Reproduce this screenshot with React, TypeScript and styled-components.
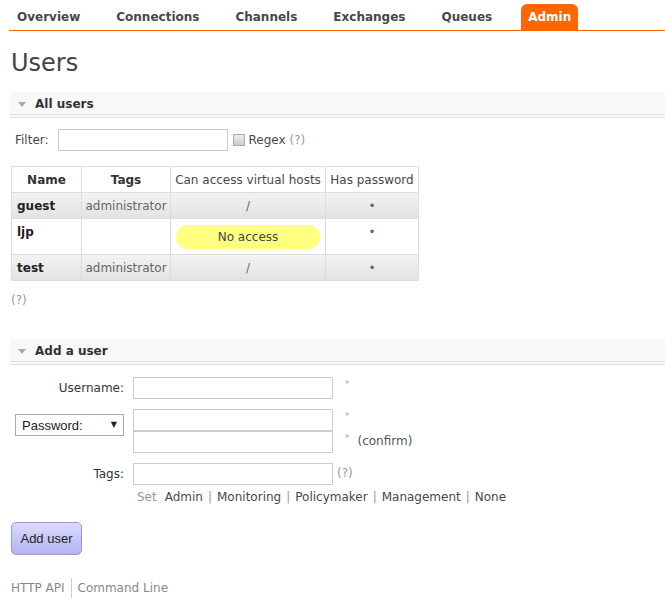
import styled, { createGlobalStyle } from "styled-components";

const GlobalStyle = createGlobalStyle`
  body {
    margin: 0;
    background: #fff;
    font-family: "DejaVu Sans", Verdana, sans-serif;
    font-size: 12px;
    color: #484848;
  }
`;

const tabs = ["Overview", "Connections", "Channels", "Exchanges", "Queues", "Admin"];

const users = [
  { name: "guest", tags: "administrator", vhosts: "/", alt: true },
  { name: "ljp", tags: "", vhosts: null, alt: false },
  { name: "test", tags: "administrator", vhosts: "/", alt: true },
];

const tagLinks = ["Admin", "Monitoring", "Policymaker", "Management", "None"];

const TabBar = styled.ul`
  display: flex;
  align-items: flex-end;
  height: 30px;
  margin: 0 0 0 9px;
  padding: 0 0 0 1px;
  list-style: none;
  border-bottom: 1px solid #f60;
`;

const Tab = styled.li<{ $active?: boolean }>`
  height: 26px;
  line-height: 26px;
  padding: 0 7px;
  margin-right: 22px;
  font-weight: bold;
  color: ${(p) => (p.$active ? "#fff" : "#484848")};
  background: ${(p) => (p.$active ? "#f60" : "transparent")};
  border-radius: 6px 6px 0 0;
`;

const Title = styled.h1`
  margin: 17px 0 14px 11px;
  font-size: 24px;
  line-height: 30px;
  font-weight: normal;
  color: #444;
`;

const SectionHeader = styled.h2<{ $top?: number }>`
  display: flex;
  align-items: center;
  gap: 9px;
  height: 20px;
  margin: ${(p) => p.$top ?? 0}px 0 0 10px;
  padding: 2px 0 0 8px;
  background: #f8f8f8;
  border-bottom: 4px double #e0e0e0;
  font-size: 12px;
  font-weight: bold;
  color: #333;
`;

const Triangle = styled.span`
  width: 0;
  height: 0;
  border-left: 4.5px solid transparent;
  border-right: 4.5px solid transparent;
  border-top: 5px solid #aaa;
`;

const Section = styled.div`
  margin-left: 11px;
`;

const FilterRow = styled.div`
  display: flex;
  align-items: center;
  margin: 11px 0 0 4px;
`;

const TextInput = styled.input<{ $width?: number }>`
  box-sizing: border-box;
  width: ${(p) => p.$width ?? 200}px;
  height: 22px;
  margin: 0;
  border: 1px solid #ccc;
  background: #fff;
  font: inherit;
`;

const FilterInput = styled(TextInput)`
  margin-left: 9px;
`;

const Checkbox = styled.span`
  box-sizing: border-box;
  width: 12px;
  height: 12px;
  margin: 0 4px 0 5px;
  border: 1px solid #aaa;
  background: linear-gradient(#eee, #ccc);
`;

const Help = styled.span`
  color: #999;
`;

const Table = styled.table`
  width: 408px;
  margin-top: 15px;
  table-layout: fixed;
  border-collapse: collapse;
  border: 1px solid #ccc;
`;

const Th = styled.th<{ $plain?: boolean; $width: number }>`
  width: ${(p) => p.$width}px;
  padding: 6px 0 5px;
  line-height: 14px;
  border: 1px solid #ddd;
  font-weight: ${(p) => (p.$plain ? "normal" : "bold")};
  color: ${(p) => (p.$plain ? "#484848" : "#333")};
  white-space: nowrap;
`;

const Tr = styled.tr<{ $alt?: boolean }>`
  background: ${(p) => (p.$alt ? "linear-gradient(#f3f3f3, #e2e2e2)" : "#fff")};
`;

const Td = styled.td<{ $name?: boolean }>`
  padding: 6px ${(p) => (p.$name ? 5 : 3)}px 5px;
  line-height: 14px;
  vertical-align: top;
  border: 1px solid #ddd;
  white-space: nowrap;
  text-align: ${(p) => (p.$name ? "left" : "center")};
  font-weight: ${(p) => (p.$name ? "bold" : "normal")};
  color: ${(p) => (p.$name ? "#222" : "#666")};
`;

const Pill = styled.div`
  height: 24px;
  margin: 0 2px;
  line-height: 24px;
  border-radius: 12px;
  background: #ffff80;
  color: #444;
  text-align: center;
`;

const HelpLine = styled.div`
  margin-top: 12px;
  color: #999;
`;

const Form = styled.div`
  display: grid;
  grid-template-columns: 113px auto;
  column-gap: 9px;
  row-gap: 10px;
  align-items: center;
  margin-top: 12px;
`;

const Label = styled.label`
  justify-self: end;
  color: #333;
`;

const Field = styled.div`
  display: flex;
  align-items: flex-start;
`;

const Stack = styled.div`
  display: flex;
  flex-direction: column;
`;

const Required = styled.span`
  margin: 2px 0 0 12px;
  font-size: 9px;
  color: #f08a8a;
`;

const Note = styled.span`
  margin: 3px 0 0 8px;
  color: #555;
`;

const FieldHelp = styled(Help)`
  margin: 3px 0 0 4px;
`;

const SelectWrap = styled.div`
  position: relative;
  justify-self: end;
  align-self: start;
  margin-top: 5px;
`;

const Select = styled.select`
  box-sizing: border-box;
  width: 109px;
  height: 22px;
  padding-left: 6px;
  border: 1px solid #aaa;
  background: #fff;
  appearance: none;
  font-family: "Liberation Sans", Arial, sans-serif;
  font-size: 13px;
  color: #222;
`;

const Arrow = styled.span`
  position: absolute;
  right: 7px;
  top: 6px;
  font-size: 8px;
  color: #222;
  pointer-events: none;
`;

const SetLine = styled.div`
  grid-column: 2;
  margin-top: -5px;
  padding-left: 4px;
  color: #484848;
`;

const SetWord = styled.span`
  margin-right: 8px;
  color: #999;
`;

const Sep = styled.span`
  margin: 0 5px;
  color: #999;
`;

const Button = styled.button`
  display: block;
  box-sizing: border-box;
  width: 71px;
  height: 33px;
  margin-top: 18px;
  border: 1px solid #99c;
  border-radius: 5px;
  background: linear-gradient(#dadaff, #b4b4f2);
  font-family: "Liberation Sans", Arial, sans-serif;
  font-size: 13px;
  color: #222;
`;

const Footer = styled.div`
  display: flex;
  align-items: center;
  margin: 23px 0 0 11px;
  color: #888;
`;

const FooterLink = styled.span<{ $divider?: boolean }>`
  padding: ${(p) => (p.$divider ? "3px 0 3px 6px" : "3px 6px 3px 0")};
  border-left: ${(p) => (p.$divider ? "1px solid #ccc" : "none")};
`;

export default function App() {
  return (
    <>
      <GlobalStyle />
      <TabBar>
        {tabs.map((t) => (
          <Tab key={t} $active={t === "Admin"}>
            {t}
          </Tab>
        ))}
      </TabBar>

      <Title>Users</Title>

      <SectionHeader>
        <Triangle />
        All users
      </SectionHeader>
      <Section>
        <FilterRow>
          <span>Filter:</span>
          <FilterInput $width={170} />
          <Checkbox />
          <span>
            Regex <Help>(?)</Help>
          </span>
        </FilterRow>

        <Table>
          <thead>
            <tr>
              <Th $width={69}>Name</Th>
              <Th $width={88}>Tags</Th>
              <Th $width={154} $plain>
                Can access virtual hosts
              </Th>
              <Th $width={92} $plain>
                Has password
              </Th>
            </tr>
          </thead>
          <tbody>
            {users.map((u) => (
              <Tr key={u.name} $alt={u.alt}>
                <Td $name>{u.name}</Td>
                <Td>{u.tags}</Td>
                <Td>{u.vhosts ?? <Pill>No access</Pill>}</Td>
                <Td>•</Td>
              </Tr>
            ))}
          </tbody>
        </Table>

        <HelpLine>(?)</HelpLine>
      </Section>

      <SectionHeader $top={32}>
        <Triangle />
        Add a user
      </SectionHeader>
      <Section>
        <Form>
          <Label>Username:</Label>
          <Field>
            <TextInput />
            <Required>*</Required>
          </Field>

          <SelectWrap>
            <Select defaultValue="password">
              <option value="password">Password:</option>
              <option value="hash">Password hash:</option>
            </Select>
            <Arrow>▼</Arrow>
          </SelectWrap>
          <Stack>
            <Field>
              <TextInput type="password" />
              <Required>*</Required>
            </Field>
            <Field>
              <TextInput type="password" />
              <Required>*</Required>
              <Note>(confirm)</Note>
            </Field>
          </Stack>

          <Label>Tags:</Label>
          <Field>
            <TextInput />
            <FieldHelp>(?)</FieldHelp>
          </Field>

          <SetLine>
            <SetWord>Set</SetWord>
            {tagLinks.map((t, i) => (
              <span key={t}>
                {i > 0 && <Sep>|</Sep>}
                {t}
              </span>
            ))}
          </SetLine>
        </Form>

        <Button>Add user</Button>
      </Section>

      <Footer>
        <FooterLink>HTTP API</FooterLink>
        <FooterLink $divider>Command Line</FooterLink>
      </Footer>
    </>
  );
}
